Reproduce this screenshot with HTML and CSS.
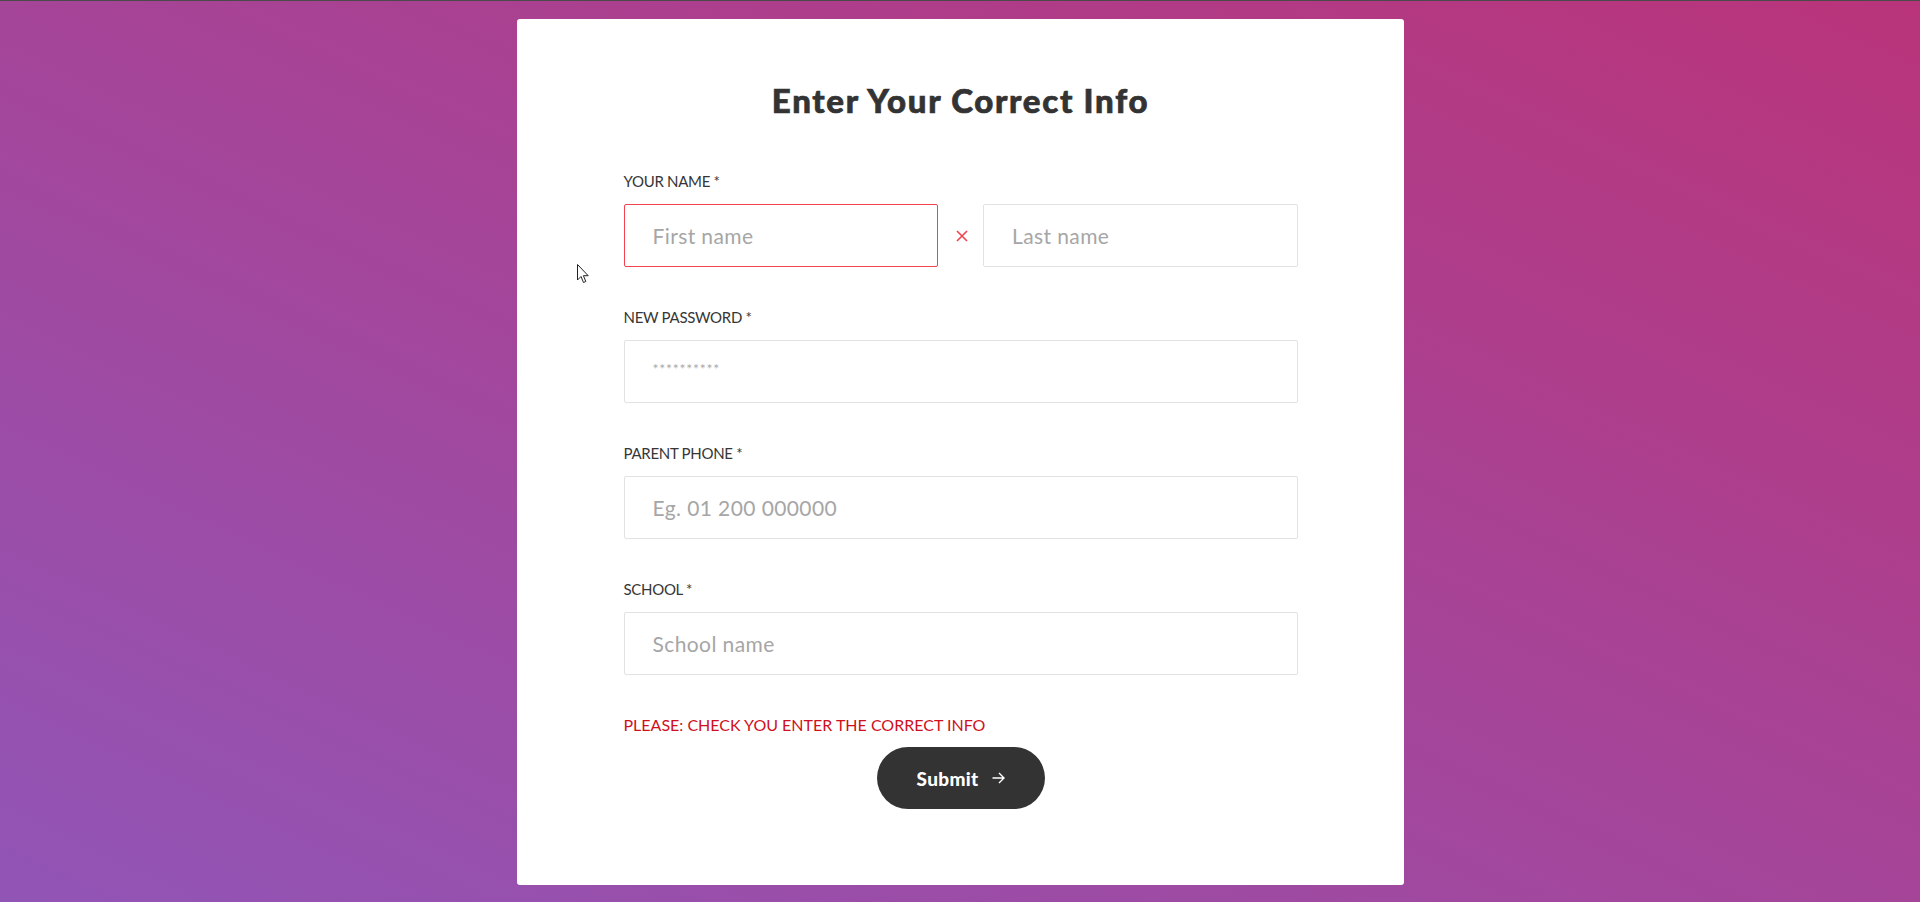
FILE: index.html
```html
<!DOCTYPE html>
<html lang="en">
<head>
<meta charset="utf-8">
<title>Enter Your Correct Info</title>
<link rel="stylesheet" href="styles.css">
</head>
<body>
  <main class="card">
    <h1 class="title">Enter Your Correct Info</h1>
    <form class="form">
      <div class="field">
        <label class="label">YOUR NAME *</label>
        <div class="name-row">
          <input class="input input-error" type="text" placeholder="First name">
          <span class="clear-icon">
            <svg width="12" height="12" viewBox="0 0 12 12"><path d="M1 1 L11 11 M11 1 L1 11" stroke="#f2434f" stroke-width="1.6" fill="none"/></svg>
          </span>
          <input class="input" type="text" placeholder="Last name">
        </div>
      </div>
      <div class="field">
        <label class="label">NEW PASSWORD *</label>
        <input class="input input-password" type="password" placeholder="**********">
      </div>
      <div class="field">
        <label class="label">PARENT PHONE *</label>
        <input class="input" type="text" placeholder="Eg. 01 200 000000">
      </div>
      <div class="field">
        <label class="label">SCHOOL *</label>
        <input class="input" type="text" placeholder="School name">
      </div>
      <p class="warning">PLEASE: CHECK YOU ENTER THE CORRECT INFO</p>
      <div class="actions">
        <button class="submit" type="button">
          <span>Submit</span>
          <svg width="13" height="12" viewBox="0 0 13 12"><path d="M0.5 6 H12 M7 1 L12 6 L7 11" stroke="#fff" stroke-width="1.4" fill="none" stroke-linejoin="miter"/></svg>
        </button>
      </div>
    </form>
  </main>
  <svg class="cursor" width="13" height="20" viewBox="0 0 13 20"><path d="M0.5 0.5 L0.5 16 L4 12.5 L6.5 18.5 L8.8 17.5 L6.4 11.7 L11.2 11.7 Z" fill="#fff" stroke="#222" stroke-width="1"/></svg>
</body>
</html>
```
FILE: styles.css
```css
html, body {
  margin: 0;
  padding: 0;
}
body {
  min-height: 100vh;
  box-sizing: border-box;
  border-top: 1px solid #4a4a4a;
  padding-top: 18px;
  background: linear-gradient(to top right, #9155b6, #b9347a);
  font-family: Lato, "Open Sans", sans-serif;
  position: relative;
}
.card {
  width: 887px;
  box-sizing: border-box;
  margin: 0 auto;
  background: #fff;
  border-radius: 3px;
  padding: 61px 106px 76px 107px;
}
.title {
  margin: 0 0 51px;
  text-align: center;
  font-size: 33px;
  line-height: 40px;
  font-weight: 900;
  letter-spacing: 1.7px;
  -webkit-text-stroke: 0.7px #333;
  color: #333;
}
.form {
  display: flex;
  flex-direction: column;
}
.field {
  display: flex;
  flex-direction: column;
  margin-bottom: 40px;
}
.label {
  display: block;
  font-size: 15px;
  line-height: 20px;
  letter-spacing: -0.3px;
  color: #363636;
  margin-bottom: 13px;
}
.name-row {
  display: grid;
  grid-template-columns: 1fr 45px 1fr;
  align-items: center;
}
.clear-icon {
  display: flex;
  justify-content: center;
  align-items: center;
}
.clear-icon svg {
  display: block;
  margin-left: 2px;
}
.input {
  box-sizing: border-box;
  height: 63px;
  width: 100%;
  border: 1px solid #e2e2e2;
  border-radius: 2px;
  padding: 0 20px 0 28px;
  font-family: Lato, "Open Sans", sans-serif;
  font-size: 21px;
  color: #333;
  background: #fff;
  outline: none;
}
.input::placeholder {
  color: #a6a6a6;
  letter-spacing: 0.4px;
}
.input-error {
  border-color: #f2434f;
}
.input-password {
  font-size: 14px;
  padding-bottom: 7px;
}
.input-password::placeholder {
  color: #aaa;
  letter-spacing: 0.8px;
}
.warning {
  margin: 0 0 12px;
  font-size: 16px;
  line-height: 20px;
  color: #d0101c;
}
.actions {
  display: flex;
  justify-content: center;
}
.submit {
  width: 168px;
  height: 62px;
  border: none;
  border-radius: 31px;
  background: #333;
  color: #fff;
  display: flex;
  align-items: center;
  justify-content: center;
  gap: 14px;
  font-family: Lato, "Open Sans", sans-serif;
  font-size: 19px;
  font-weight: 900;
  letter-spacing: 0.3px;
  padding: 0 0 0 1px;
  cursor: pointer;
}
.submit svg {
  display: block;
}
.cursor {
  position: absolute;
  left: 577px;
  top: 263px;
}
```
